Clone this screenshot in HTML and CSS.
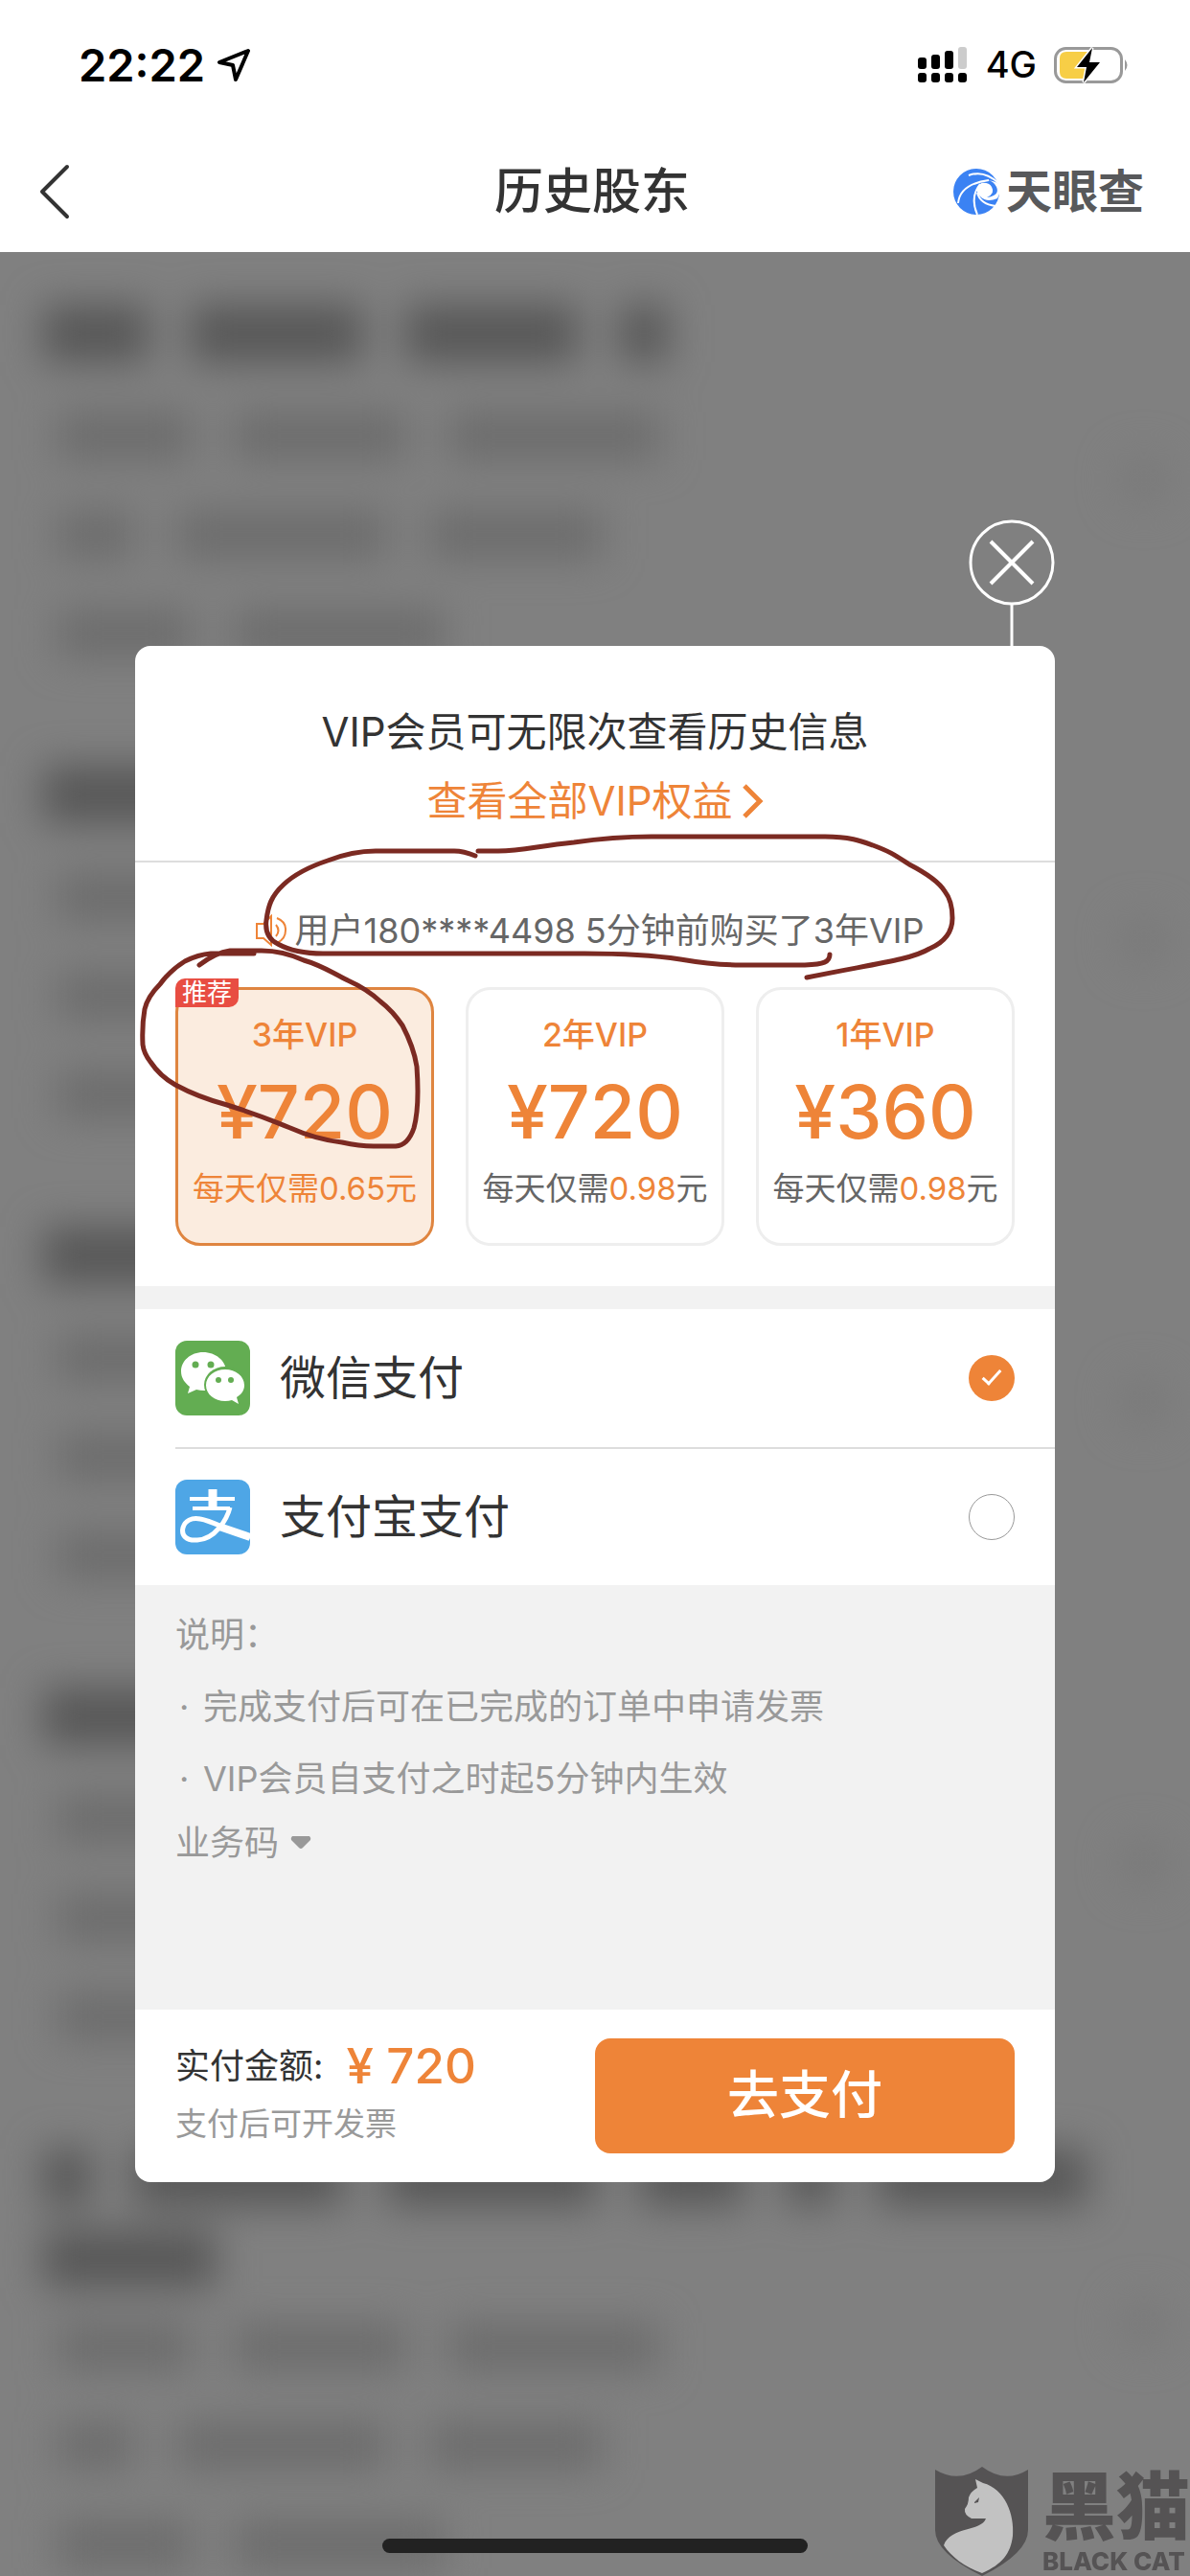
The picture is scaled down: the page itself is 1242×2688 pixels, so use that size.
FILE: index.html
```
<!DOCTYPE html>
<html lang="zh-CN">
<head>
  <meta charset="utf-8">
  <meta name="viewport" content="width=device-width, initial-scale=1">
  <title>历史股东</title>
  <link rel="stylesheet" href="styles.css">
</head>
<body>
  <!-- Status bar -->
  <div class="status-bar">
    <div class="status-left">
      <span class="time">22:22</span>
      <svg width="36" height="36" viewBox="0 0 36 36"><path d="M33 3 L3 15 L17 18 L20 33 Z" fill="none" stroke="#000" stroke-width="4" stroke-linejoin="round"/></svg>
    </div>
    <div class="status-right">
      <svg width="54" height="40" viewBox="0 0 54 40">
        <rect x="1" y="12" width="9" height="12" rx="3"/>
        <rect x="15" y="9" width="9" height="15" rx="3"/>
        <rect x="29" y="5" width="9" height="19" rx="3"/>
        <rect x="43" y="1" width="9" height="23" rx="3" fill="#ccc"/>
        <rect x="1" y="28" width="9" height="10" rx="3"/>
        <rect x="15" y="28" width="9" height="10" rx="3"/>
        <rect x="29" y="28" width="9" height="10" rx="3"/>
        <rect x="43" y="28" width="9" height="10" rx="3"/>
      </svg>
      <span class="network">4G</span>
      <svg width="80" height="40" viewBox="0 0 80 40">
        <rect x="1.500" y="2.500" width="69" height="35" rx="11" fill="#fff" stroke="#999" stroke-width="3"/>
        <path d="M13 6 H37 V34 H13 Q6 34 6 27 V13 Q6 6 13 6 Z" fill="#f7ce46"/>
        <path d="M74 14 Q79 20 74 26 Z" fill="#999"/>
        <path d="M40 2 L24 22 H34 L31 38 L48 17 H37 Z" fill="#000" stroke="#fff" stroke-width="3" paint-order="stroke"/>
      </svg>
    </div>
  </div>

  <!-- Nav bar -->
  <header class="nav-bar">
    <button class="back" type="button" aria-label="返回">
      <svg width="34" height="60" viewBox="0 0 34 60"><path d="M30 4 L4 30 L30 56" fill="none" stroke="#333" stroke-width="4" stroke-linecap="round" stroke-linejoin="round"/></svg>
    </button>
    <h1>历史股东</h1>
    <div class="brand">
      <svg width="50" height="50" viewBox="0 0 50 50">
        <circle cx="25" cy="25" r="24" fill="#3b82f3"/>
        <path d="M49 17 Q38 10 29 17 Q22 23 29 30 Q36 37 47 32 L50 25 Z" fill="#fff"/>
        <path d="M30 16 Q40 9 46 20 Q50 29 36 31 Q45 27 41 20 Q38 15 30 16 Z" fill="#3b82f3"/>
        <path d="M17 8 Q33 2 48 16 M6 37 Q8 17 38 13 M26 49 Q18 31 29 17 M45 40 Q29 38 26 26" fill="none" stroke="#fff" stroke-width="2"/>
      </svg>
      <span>天眼查</span>
    </div>
  </header>

  <main class="page">
    <!-- Locked records, only readable for members -->
    <div class="records" aria-hidden="true">
      <div class="record">
        <div class="line title"><i class="w110"></i><i class="w180"></i><i class="w180"></i><i class="w50"></i></div>
        <div class="line"><i class="w140"></i><i class="w180"></i><i class="w220"></i></div>
        <div class="line"><i class="w80"></i><i class="w220"></i><i class="w180"></i></div>
        <div class="line"><i class="w140"></i><i class="w220"></i></div>
      </div>
      <div class="record">
        <div class="line title"><i class="w160"></i><i class="w180"></i></div>
        <div class="line"><i class="w140"></i><i class="w180"></i></div>
        <div class="line"><i class="w140"></i><i class="w220"></i></div>
        <div class="line"><i class="w140"></i><i class="w220"></i></div>
      </div>
      <div class="record">
        <div class="line title"><i class="w180"></i><i class="w160"></i></div>
        <div class="line"><i class="w140"></i><i class="w180"></i></div>
        <div class="line"><i class="w140"></i><i class="w220"></i></div>
        <div class="line"><i class="w140"></i><i class="w220"></i></div>
      </div>
      <div class="record">
        <div class="line title"><i class="w180"></i><i class="w160"></i></div>
        <div class="line"><i class="w140"></i><i class="w180"></i></div>
        <div class="line"><i class="w140"></i><i class="w220"></i></div>
        <div class="line"><i class="w140"></i><i class="w220"></i></div>
      </div>
      <div class="record">
        <div class="line title"><i class="w50"></i><i class="w220"></i><i class="w220"></i><i class="w110"></i><i class="w50"></i><i class="w220"></i></div>
        <div class="line title second"><i class="w180"></i></div>
        <div class="line"><i class="w140"></i><i class="w180"></i><i class="w220"></i></div>
        <div class="line"><i class="w80"></i><i class="w220"></i><i class="w180"></i></div>
        <div class="line"><i class="w140"></i><i class="w220"></i></div>
      </div>
    </div>

    <!-- VIP dialog -->
    <div class="overlay">
      <button class="close" type="button" aria-label="关闭">
        <svg width="90" height="132" viewBox="0 0 90 132"><g fill="none" stroke="#fff"><circle cx="45" cy="45" r="43" stroke-width="3"/><path d="M23 23 L67 67 M67 23 L23 67" stroke-width="4"/><path d="M45 89 V132" stroke-width="3"/></g></svg>
      </button>
      <section class="dialog" role="dialog" aria-labelledby="dialog-title">
        <div class="dialog-head">
          <h2 id="dialog-title">VIP会员可无限次查看历史信息</h2>
          <a href="#">查看全部VIP权益<svg width="24" height="36" viewBox="0 0 24 36"><path d="M4 2 L20 18 L4 34" fill="none" stroke="#ee8438" stroke-width="5"/></svg></a>
        </div>

        <div class="plan-section">
          <p class="notice">
            <svg width="34" height="34" viewBox="0 0 34 34" fill="none" stroke="#ee8438" stroke-width="2"><path d="M2 10 H9 L17 2 V32 L9 25 H2 Z M22 11 Q27 17 22 23 M23 4 Q33 8 32 17 Q32 26 23 30"/></svg>
            <span>用户180****4498 5分钟前购买了3年VIP</span>
          </p>
          <div class="plans">
            <button class="plan selected" type="button">
              <span class="badge">推荐</span>
              <span class="plan-name">3年VIP</span>
              <span class="price">¥720</span>
              <span class="per-day">每天仅需<b>0.65</b>元</span>
            </button>
            <button class="plan" type="button">
              <span class="plan-name">2年VIP</span>
              <span class="price">¥720</span>
              <span class="per-day">每天仅需<b>0.98</b>元</span>
            </button>
            <button class="plan" type="button">
              <span class="plan-name">1年VIP</span>
              <span class="price">¥360</span>
              <span class="per-day">每天仅需<b>0.98</b>元</span>
            </button>
          </div>
        </div>

        <div class="pay-methods">
          <label class="pay-method">
            <svg width="78" height="78" viewBox="0 0 78 78">
              <rect width="78" height="78" rx="12" fill="#63ad52"/>
              <path d="M29 12 C16 12 6 21 6 32 C6 39 10 44 15 48 L13 55 L22 51 Q26 52 30 52 C43 52 53 43 53 32 C53 21 42 12 29 12 Z" fill="#fff"/>
              <ellipse cx="52" cy="46" rx="22" ry="19" fill="#63ad52"/>
              <path d="M52 30 C41 30 32 37 32 46.500 C32 56 41 63 52 63 Q56 63 59 62 L66 66 L64 59 C69 56 72 52 72 46.500 C72 37 63 30 52 30 Z" fill="#fff"/>
              <g fill="#63ad52"><circle cx="21" cy="25" r="3.500"/><circle cx="37" cy="25" r="3.500"/><circle cx="45" cy="41" r="3"/><circle cx="58" cy="41" r="3"/></g>
            </svg>
            <span>微信支付</span>
            <input type="radio" name="pay" value="wechat" checked>
          </label>
          <label class="pay-method">
            <svg width="78" height="78" viewBox="0 0 78 78">
              <rect width="78" height="78" rx="12" fill="#4ea6e6"/>
              <g fill="none" stroke="#fff">
                <path d="M15 20 H62 M18 30 H57" stroke-width="4"/>
                <path d="M39 10 V30" stroke-width="9"/>
                <path d="M57 29 C54 41 42 62 23 63 C11 64 6 58 8 50 C10 43 17 39 26 41 C39 43 54 53 78 60" stroke-width="5"/>
                <path d="M46 49 L78 60" stroke-width="8"/>
              </g>
            </svg>
            <span>支付宝支付</span>
            <input type="radio" name="pay" value="alipay">
          </label>
        </div>

        <div class="notes">
          <p>说明：</p>
          <ul>
            <li>完成支付后可在已完成的订单中申请发票</li>
            <li>VIP会员自支付之时起5分钟内生效</li>
          </ul>
          <button class="biz-code" type="button">业务码<svg width="22" height="14" viewBox="0 0 22 14"><path d="M2 0 H20 Q22 2 21 4 L13 12 Q11 14 9 12 L1 4 Q0 2 2 0 Z" fill="#999"/></svg></button>
        </div>

        <div class="pay-bar">
          <div class="amount">
            <p class="total"><span>实付金额:</span><strong>¥ 720</strong></p>
            <p class="invoice">支付后可开发票</p>
          </div>
          <button class="pay-btn" type="button">去支付</button>
        </div>

        <!-- Marker strokes -->
        <svg class="marker" width="960" height="350" viewBox="141 864 960 350">
          <path d="M496 893 Q484 888 474 888 H392 Q368 888 342 898 Q312 908 296 923 C283 935 280 945 278 960 C276 975 284 982 290 985 Q308 995 337 995 H610 C665 995 690 998 710 1001 Q745 1007 773 1007 H840 C860 1006 866 1004 866 996"/>
          <path d="M499 888 H520 C545 888 560 883 599 879 Q640 873 680 873 H861 C888 873 900 878 911 882 C930 889 935 893 949 902 Q978 917 986 930 Q994 940 994 958 C994 975 984 984 970 990 C950 1002 910 1006 842 1020"/>
          <path d="M265 995 H220 Q207 996 193 1003 Q177 1013 167 1027 Q154 1040 151 1053 Q148 1070 149 1090 Q150 1099 157 1108 Q167 1123 183 1132 Q207 1145 237 1153 C275 1165 280 1168 303 1177 Q330 1189 357 1192 Q375 1196 390 1196 H413 Q426 1195 432 1177 Q438 1155 435 1113 Q432 1093 420 1070 Q410 1055 397 1045 Q383 1032 363 1023 C345 1014 335 1007 317 1002 Q295 992 273 992 H240 Q225 994 208 1007"/>
        </svg>
      </section>
    </div>
  </main>

  <div class="home-indicator"></div>

  <div class="watermark">
    <svg width="98" height="114" viewBox="0 0 98 114">
      <path d="M0 3 Q25 18 49 0 Q73 18 97 3 V66 Q97 90 49 114 Q0 90 0 66 Z" fill="#555354"/>
      <path d="M42 13 L50 17 C73 23 83 50 81 72 C79 90 70 102 49 111 C30 104 17 94 9 82 C16 62 48 68 53 54 H38 Q30 50 31 44 Q35 39 35 32 Q37 26 44 22 Z" fill="#c2c2c2"/>
      <path d="M41 37 L46 32 L45 37 L41 38 Z" fill="#555354"/>
    </svg>
    <div class="watermark-text"><span class="cn">黑猫</span><span class="en">BLACK CAT</span></div>
  </div>
</body>
</html>
```
FILE: styles.css
```
:root {
  --orange: #ee8438;
  --text: #333;
  --grey: #999;
  --light: #f2f2f2;
}
*, *::before, *::after { box-sizing: border-box; }
body { margin: 0; height: 100vh; display: flex; flex-direction: column; overflow: hidden; background: #fff; color: var(--text); font-family: Inter, "Noto Sans CJK SC", sans-serif; font-size: 36px; line-height: 1.2; }
h1, h2, p, ul { margin: 0; padding: 0; font-weight: 400; }
button { margin: 0; padding: 0; border: none; background: none; font: inherit; color: inherit; cursor: pointer; }
svg { display: block; flex: none; }

/* Status bar and nav */
.status-bar { display: flex; justify-content: space-between; align-items: center; height: 136px; padding: 0 62px 0 82px; color: #000; }
.status-left, .status-right { display: flex; align-items: center; }
.status-left { gap: 12px; }
.status-right { gap: 18px; }
.time { font-size: 47px; font-weight: 600; }
.network { font-size: 38px; font-weight: 500; }
.nav-bar { display: flex; justify-content: space-between; align-items: center; height: 127px; padding: 0 46px 0 40px; }
.nav-bar h1 { font-size: 51px; font-weight: 500; }
.back, .brand { width: 202px; }
.brand { display: flex; align-items: center; gap: 6px; color: #58595b; font-size: 48px; font-weight: 700; white-space: nowrap; }

/* Blurred list */
.page { position: relative; flex: 1; min-height: 0; overflow: hidden; background: #808080; }
.records { padding: 30px 45px; filter: blur(20px); }
.record { position: relative; padding-bottom: 62px; }
.record::after { content: ""; position: absolute; top: 180px; right: -25px; width: 56px; height: 56px; border-radius: 50%; background: #7a7a7a; }
.line { display: flex; align-items: center; gap: 44px; height: 103px; padding-left: 15px; }
.line i { height: 50px; background: #6c6c6c; }
.line.title { height: 110px; padding-left: 0; }
.line.title i { height: 60px; background: #575757; }
.line.title.second { height: 70px; align-items: flex-start; }
.w50 { width: 50px; }
.w80 { width: 80px; }
.w110 { width: 110px; }
.w140 { width: 140px; }
.w160 { width: 160px; }
.w180 { width: 180px; }
.w220 { width: 220px; }

/* Dialog */
.overlay { position: absolute; inset: 0; display: flex; flex-direction: column; padding: 279px 141px 0; }
.close { align-self: flex-end; }
.dialog { position: relative; overflow: hidden; border-radius: 16px; background: #fff; }
.dialog-head { padding: 54px 0 26px; border-bottom: 2px solid #ddd; font-size: 42px; line-height: 72px; text-align: center; }
.dialog-head h2 { font-size: 42px; }
.dialog-head a { display: flex; justify-content: center; align-items: center; gap: 8px; color: var(--orange); text-decoration: none; }
.plan-section { padding: 42px; border-bottom: 24px solid var(--light); }
.notice { display: flex; justify-content: center; align-items: center; gap: 8px; margin-bottom: 30px; padding-right: 12px; color: #666; line-height: 58px; white-space: nowrap; }
.plans { display: flex; gap: 33px; }
.plan { position: relative; flex: 1; height: 270px; padding-bottom: 10px; border: 3px solid #eee; border-radius: 26px; color: var(--orange); }
.plan.selected { border-color: #df8540; background: #fbecdf; }
.badge { position: absolute; top: -12px; left: -3px; width: 66px; border-radius: 10px 0; background: #e84d42; color: #fff; font-size: 26px; line-height: 30px; }
.plan-name, .price, .per-day { display: block; white-space: nowrap; }
.plan-name { font-size: 34px; font-weight: 500; line-height: 40px; }
.price { margin: 20px 0; font-size: 77px; font-weight: 500; line-height: 80px; }
.per-day { color: #666; font-size: 33px; line-height: 40px; }
.per-day b { color: var(--orange); font-weight: 400; }
.plan.selected .per-day { color: var(--orange); }

/* Payment methods */
.pay-methods { padding-left: 42px; }
.pay-method { display: flex; align-items: center; gap: 31px; height: 144px; padding-right: 42px; font-size: 48px; }
.pay-method + .pay-method { border-top: 2px solid #ddd; }
.pay-method input { appearance: none; display: flex; justify-content: center; width: 48px; height: 48px; margin: 0 0 0 auto; border: 1px solid #999; border-radius: 50%; }
.pay-method input:checked { border: none; background: var(--orange); }
.pay-method input:checked::after { content: ""; width: 10px; height: 20px; margin-top: 11px; border: solid #fff; border-width: 0 3px 3px 0; transform: rotate(42deg); }

.notes { min-height: 443px; padding: 15px 42px; background: var(--light); color: var(--grey); line-height: 75px; }
.notes ul { list-style: none; }
.notes li { display: flex; }
.notes li::before { content: "·"; width: 29px; padding-left: 4px; }
.biz-code { display: flex; align-items: center; gap: 12px; line-height: 58px; }

.pay-bar { display: flex; justify-content: space-between; align-items: center; padding: 30px 42px; }
.total { display: flex; align-items: center; gap: 24px; height: 58px; line-height: 58px; }
.total strong { color: var(--orange); font-size: 51px; font-weight: 500; }
.invoice { color: var(--grey); font-size: 33px; line-height: 62px; }
.pay-btn { width: 50%; height: 120px; border-radius: 16px; background: var(--orange); color: #fff; font-size: 54px; font-weight: 500; }

.marker { position: absolute; top: 190px; left: 0; fill: none; stroke: #7b2a22; stroke-width: 5; stroke-linecap: round; pointer-events: none; }

.home-indicator { position: fixed; bottom: 24px; left: 50%; width: 444px; height: 15px; margin-left: -222px; border-radius: 8px; background: #222; }
.watermark { position: fixed; right: 0; bottom: 0; display: flex; gap: 14px; color: #555354; }
.watermark-text { display: flex; flex-direction: column; white-space: nowrap; }
.cn { font-size: 77px; font-weight: 900; line-height: 84px; }
.en { font-size: 26px; font-weight: 800; line-height: 30px; }
```
